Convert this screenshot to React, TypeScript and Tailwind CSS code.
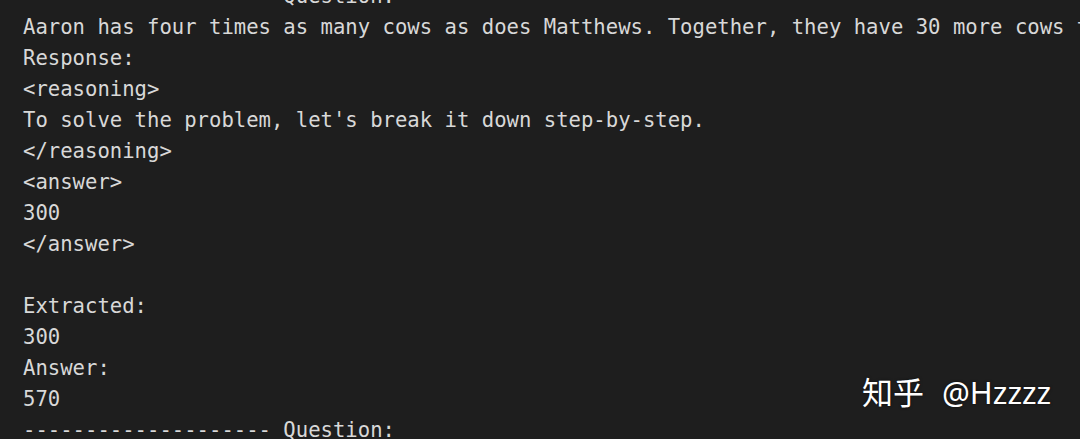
import React from "react";

const lines = [
  "-------------------- Question:",
  "Aaron has four times as many cows as does Matthews. Together, they have 30 more cows than Marovich. If Matthews has 60 cows, how many cows do the three have altogether?",
  "Response:",
  "<reasoning>",
  "To solve the problem, let's break it down step-by-step.",
  "</reasoning>",
  "<answer>",
  "300",
  "</answer>",
  "",
  "Extracted:",
  "300",
  "Answer:",
  "570",
  "-------------------- Question:",
];

const App = () => {
  return (
    <div className="relative h-[439px] w-[1080px] overflow-hidden bg-[#1e1e1e]">
      <div className="flex flex-col pl-[23px] -mt-[19px] font-['DejaVu_Sans_Mono',monospace] text-[20.6px] leading-[31px] text-[#d8d8d8] whitespace-pre">
        {lines.map((line, i) => (
          <div key={i}>{line === "" ? " " : line}</div>
        ))}
      </div>
      {/* watermark */}
      <div className="absolute left-[862px] top-[377px] flex items-center gap-[18px] font-['Noto_Sans','Noto_Sans_CJK_SC',sans-serif] text-[31px] leading-none text-white [text-shadow:0_0_3px_rgba(0,0,0,0.6)]">
        <span>知乎</span>
        <span>@Hzzzz</span>
      </div>
    </div>
  );
};

export default App;
